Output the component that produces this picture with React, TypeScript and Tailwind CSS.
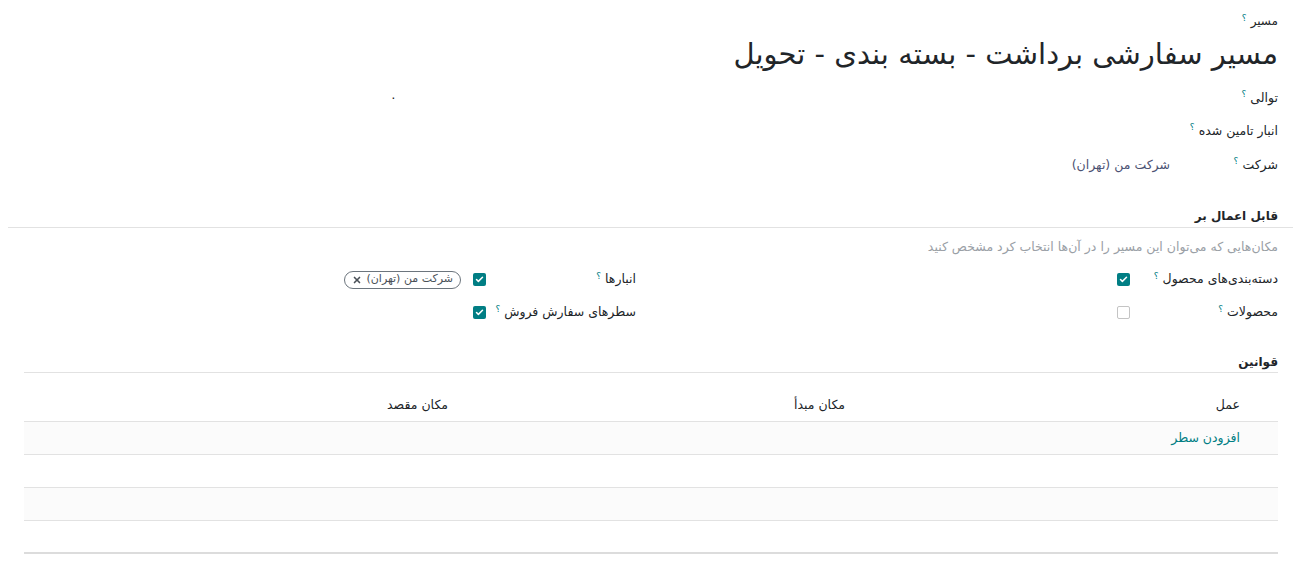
import { Check, X } from "lucide-react";

const font = { fontFamily: '"DejaVu Sans", "Noto Sans", sans-serif' };

function Q() {
  return <sup className="mr-1 text-[9px] font-normal text-[#017e84]">؟</sup>;
}

function Box({ checked }: { checked: boolean }) {
  return checked ? (
    <span className="flex h-[13px] w-[13px] shrink-0 items-center justify-center rounded-[2px] bg-[#017e84]">
      <Check className="h-[9px] w-[9px] text-white" strokeWidth={4} />
    </span>
  ) : (
    <span className="block h-[13px] w-[13px] shrink-0 rounded-[2px] border border-[#c4c4c4] bg-white" />
  );
}

export default function App() {
  return (
    <div dir="rtl" className="h-[578px] w-full overflow-hidden bg-white text-[#212529]" style={font}>
      <div className="pr-[30px] pt-[12px]">
        <div className="text-[12px] leading-[18px]">
          مسیر
          <Q />
        </div>
        <h1 className="mt-[2px] text-[29px] leading-[44px]">مسیر سفارشی برداشت - بسته بندی - تحویل</h1>
      </div>

      <div className="mt-[6px] pr-[30px]">
        <div className="grid grid-cols-[108px_786px] text-[12.5px]">
          <div className="flex h-[33px] items-center whitespace-nowrap">
            توالی
            <Q />
          </div>
          <div className="flex h-[33px] items-center justify-end pl-[6px]">۰</div>
          <div className="col-span-2 flex h-[33px] items-center whitespace-nowrap">
            انبار تامین شده
            <Q />
          </div>
          <div className="flex h-[34px] items-center whitespace-nowrap">
            شرکت
            <Q />
          </div>
          <div className="flex h-[34px] items-center text-[#4c5273]">شرکت من (تهران)</div>
        </div>
      </div>

      <div className="ml-[8px] mr-[15px] mt-[25px] border-b border-[#e2e2e2] pb-[2px] pr-[15px] text-[12px] font-semibold leading-[18px]">
        قابل اعمال بر
      </div>
      <div className="pr-[30px] pt-[9px] text-[12.5px] leading-[20px] text-[#9aa0a6]">
        مکان‌هایی که می‌توان این مسیر را در آن‌ها انتخاب کرد مشخص کنید
      </div>

      <div className="mt-[6px] grid grid-cols-[642px_1fr] pr-[30px] text-[12.5px]">
        <div>
          <div className="flex h-[33px] items-center">
            <div className="w-[148px] shrink-0 whitespace-nowrap">
              دسته‌بندی‌های محصول
              <Q />
            </div>
            <Box checked />
          </div>
          <div className="flex h-[33px] items-center">
            <div className="w-[148px] shrink-0 whitespace-nowrap">
              محصولات
              <Q />
            </div>
            <Box checked={false} />
          </div>
        </div>
        <div>
          <div className="flex h-[33px] items-center">
            <div className="w-[150px] shrink-0 whitespace-nowrap">
              انبارها
              <Q />
            </div>
            <Box checked />
            <span className="mr-[12px] flex h-[18px] items-center gap-[4px] whitespace-nowrap rounded-full border border-[#6c757d] px-[7px] text-[11px] text-[#495057]">
              شرکت من (تهران)
              <X className="h-[10px] w-[10px] text-[#495057]" strokeWidth={4} />
            </span>
          </div>
          <div className="flex h-[33px] items-center">
            <div className="w-[150px] shrink-0 whitespace-nowrap">
              سطرهای سفارش فروش
              <Q />
            </div>
            <Box checked />
          </div>
        </div>
      </div>

      <div className="ml-[24px] mr-[30px] mt-[25px]">
        <div className="border-b border-[#e2e2e2] pb-[2px] text-[12px] font-semibold leading-[16px]">قوانین</div>
        <div className="grid h-[49px] grid-cols-[433px_397px_1fr] items-end border-b border-[#e2e2e2] pb-[6px] text-[12.5px]">
          <div className="pr-[38px]">عمل</div>
          <div>مکان مبدأ</div>
          <div>مکان مقصد</div>
        </div>
        <div className="flex h-[33px] items-center border-b border-[#e2e2e2] bg-[#fbfbfb] pr-[38px] text-[12.5px] text-[#017e84]">
          افزودن سطر
        </div>
        <div className="h-[33px] border-b border-[#e2e2e2] bg-white" />
        <div className="h-[33px] border-b border-[#e2e2e2] bg-[#fbfbfb]" />
        <div className="h-[33px] border-b-2 border-[#dcdcdc] bg-white" />
      </div>
    </div>
  );
}
